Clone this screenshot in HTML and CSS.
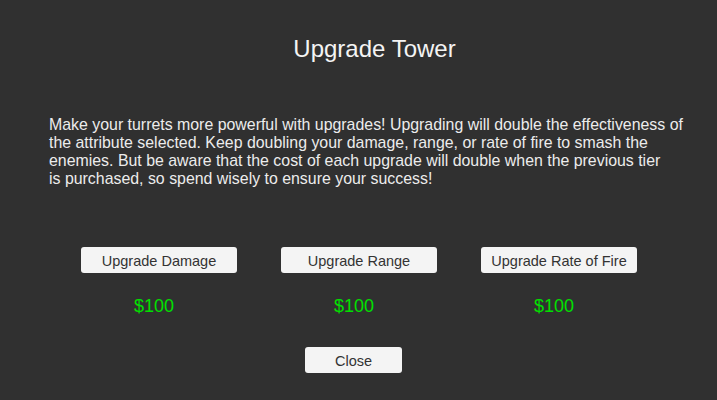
FILE: index.html
```html
<!DOCTYPE html>
<html>
<head>
<meta charset="utf-8">
<link rel="stylesheet" href="styles.css">
</head>
<body>
<div class="panel">
  <h1 class="title">Upgrade Tower</h1>
  <p class="desc">Make your turrets more powerful with upgrades! Upgrading will double the effectiveness of<br>the attribute selected. Keep doubling your damage, range, or rate of fire to smash the<br>enemies. But be aware that the cost of each upgrade will double when the previous tier<br>is purchased, so spend wisely to ensure your success!</p>
  <div class="options">
    <div class="option">
      <button class="btn btn-wide">Upgrade Damage</button>
      <div class="price">$100</div>
    </div>
    <div class="option">
      <button class="btn btn-wide">Upgrade Range</button>
      <div class="price">$100</div>
    </div>
    <div class="option">
      <button class="btn btn-wide">Upgrade Rate of Fire</button>
      <div class="price">$100</div>
    </div>
  </div>
  <div class="footer">
    <button class="btn btn-close">Close</button>
  </div>
</div>
</body>
</html>
```

FILE: styles.css
```css
html, body {
  margin: 0;
  padding: 0;
  background: #303030;
  width: 717px;
  height: 400px;
  overflow: hidden;
  font-family: "Liberation Sans", Arial, sans-serif;
}
.panel {
  display: flex;
  flex-direction: column;
}
.title {
  margin: 35px 0 0 0;
  padding-left: 32px;
  text-align: center;
  font-weight: normal;
  font-size: 24px;
  line-height: 28px;
  color: #f4f4f4;
}
.desc {
  margin: 53px 0 0 49px;
  font-size: 15.9px;
  line-height: 18px;
  color: #ececec;
}
.options {
  display: grid;
  grid-template-columns: repeat(3, 200px);
  margin: 59px 0 0 59px;
}
.option {
  display: flex;
  flex-direction: column;
  align-items: center;
}
.btn {
  background: #f4f4f4;
  border: none;
  border-radius: 3px;
  color: #333333;
  font-family: "Liberation Sans", Arial, sans-serif;
  font-size: 14.5px;
  height: 26px;
  padding: 1px 0 0 0;
}
.btn-wide {
  width: 156px;
}
.price {
  margin-top: 22px;
  margin-right: 10px;
  font-size: 18px;
  line-height: 22px;
  color: #00e000;
}
.footer {
  display: flex;
  margin: 30px 0 0 305px;
}
.btn-close {
  width: 97px;
}
```
